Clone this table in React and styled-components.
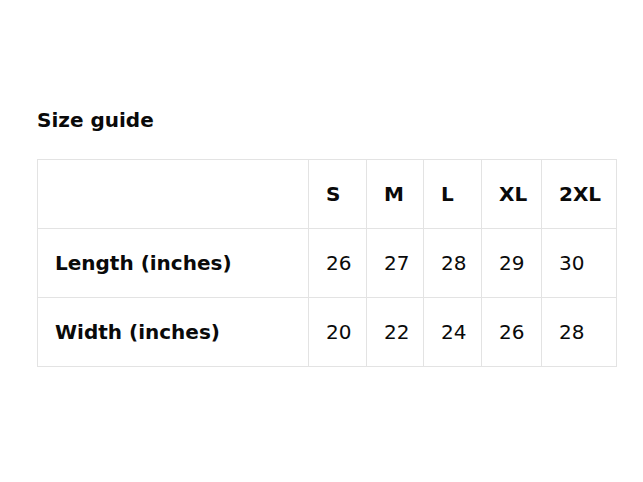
import React from 'react';
import styled, { createGlobalStyle } from 'styled-components';

const GlobalStyle = createGlobalStyle`
  body {
    margin: 0;
    background: #ffffff;
    font-family: "DejaVu Sans", "Liberation Sans", sans-serif;
    color: #0a0a0a;
  }
`;

const Page = styled.div`
  padding: 108px 0 0 37px;
`;

const Title = styled.h2`
  margin: 0 0 27px;
  font-size: 20px;
  line-height: 24px;
  font-weight: bold;
`;

const Table = styled.table`
  border-collapse: collapse;
  table-layout: fixed;
  width: 579px;
`;

const Cell = styled.td`
  border: 1px solid #e3e3e3;
  height: 68px;
  padding: 0 0 0 17px;
  font-size: 20px;
  font-weight: ${props => (props.$bold ? 'bold' : 'normal')};
  text-align: left;
  vertical-align: middle;
  white-space: nowrap;
`;

const sizes = ['S', 'M', 'L', 'XL', '2XL'];
const widths = [271, 58, 57, 58, 60, 75];

const rows = [
  { label: 'Length (inches)', values: [26, 27, 28, 29, 30] },
  { label: 'Width (inches)', values: [20, 22, 24, 26, 28] },
];

const App = () => (
  <Page>
    <GlobalStyle />
    <Title>Size guide</Title>
    <Table>
      <colgroup>
        {widths.map((w, i) => (
          <col key={i} style={{ width: w }} />
        ))}
      </colgroup>
      <tbody>
        <tr>
          <Cell />
          {sizes.map(s => (
            <Cell key={s} $bold>{s}</Cell>
          ))}
        </tr>
        {rows.map(row => (
          <tr key={row.label}>
            <Cell $bold>{row.label}</Cell>
            {row.values.map((v, i) => (
              <Cell key={i}>{v}</Cell>
            ))}
          </tr>
        ))}
      </tbody>
    </Table>
  </Page>
);

export default App;
